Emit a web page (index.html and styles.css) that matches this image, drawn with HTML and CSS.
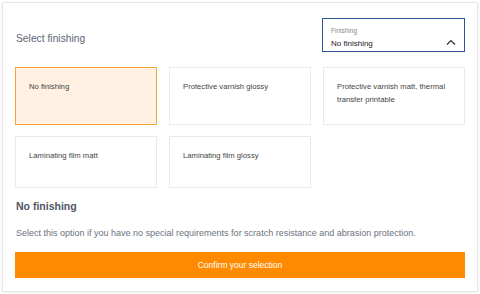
FILE: index.html
```html
<!DOCTYPE html>
<html lang="en">
  <head>
    <meta charset="UTF-8" />
    <meta name="viewport" content="width=device-width, initial-scale=1.0" />
    <title>Select finishing</title>
    <link rel="stylesheet" href="styles.css">
  </head>
  <body>
    <!-- finishing selector -->
    <div class="finish-card">
      <div class="finish-head">
        <h2 class="finish-title">Select finishing</h2>
        <div class="finish-select">
          <span class="select-label">Finishing</span>
          <span class="select-value">No finishing</span>
          <svg class="select-arrow" width="10" height="6" viewBox="0 0 10 6">
            <path d="M1 5.5 L5 1.5 L9 5.5" fill="none" stroke="#333" stroke-width="1.2" />
          </svg>
        </div>
      </div>

      <div class="finish-grid">
        <div class="finish-tile active">No finishing</div>
        <div class="finish-tile">Protective varnish glossy</div>
        <div class="finish-tile">Protective varnish matt, thermal transfer printable</div>
        <div class="finish-tile">Laminating film matt</div>
        <div class="finish-tile">Laminating film glossy</div>
      </div>

      <h3 class="finish-name">No finishing</h3>
      <p class="finish-desc">Select this option if you have no special requirements for scratch resistance and abrasion protection.</p>

      <button type="button" class="btn-confirm">Confirm your selection</button>
    </div>
  </body>
</html>
```

FILE: styles.css
```css
* {
  box-sizing: border-box;
}

body {
  margin: 0;
  background: #fff;
  font-family: "Liberation Sans", Arial, sans-serif;
}

.finish-card {
  margin: 2px;
  width: 476px;
  height: 290px;
  padding: 15px 12px 12px;
  border: 1px solid #e6e6e6;
  box-shadow: 0 1px 3px rgba(0, 0, 0, 0.06);
}

.finish-head {
  display: flex;
  justify-content: space-between;
  align-items: center;
}

.finish-title {
  margin: 6px 0 0 1px;
  font-size: 10.3px;
  font-weight: normal;
  color: #5d6678;
}

.finish-select {
  position: relative;
  width: 143px;
  height: 34px;
  padding: 7px 8px 0;
  border: 1px solid #2f5596;
  display: flex;
  flex-direction: column;
}

.select-label {
  font-size: 6.5px;
  color: #888;
  line-height: 9px;
}

.select-value {
  margin-top: 3px;
  font-size: 8px;
  color: #222;
  line-height: 11px;
}

.select-arrow {
  position: absolute;
  right: 8px;
  top: 20px;
}

.finish-grid {
  margin-top: 15px;
  display: grid;
  grid-template-columns: repeat(3, 1fr);
  gap: 11px 12px;
}

.finish-tile {
  min-height: 52px;
  padding: 13px 13px 18px;
  border: 1px solid #eaeaea;
  font-size: 7.7px;
  line-height: 12.5px;
  color: #444;
}

.finish-tile.active {
  background: #fff0e2;
  border: 1.5px solid #f7a13c;
}

.finish-name {
  margin: 12px 0 0 1px;
  font-size: 10.5px;
  color: #4f5766;
}

.finish-desc {
  margin: 16px 0 0 1px;
  font-size: 9px;
  color: #6b7280;
}

.btn-confirm {
  display: block;
  width: 100%;
  height: 26px;
  margin-top: 14px;
  border: 0;
  background: #ff8a00;
  color: #fff;
  font-family: inherit;
  font-size: 8.5px;
}
```
